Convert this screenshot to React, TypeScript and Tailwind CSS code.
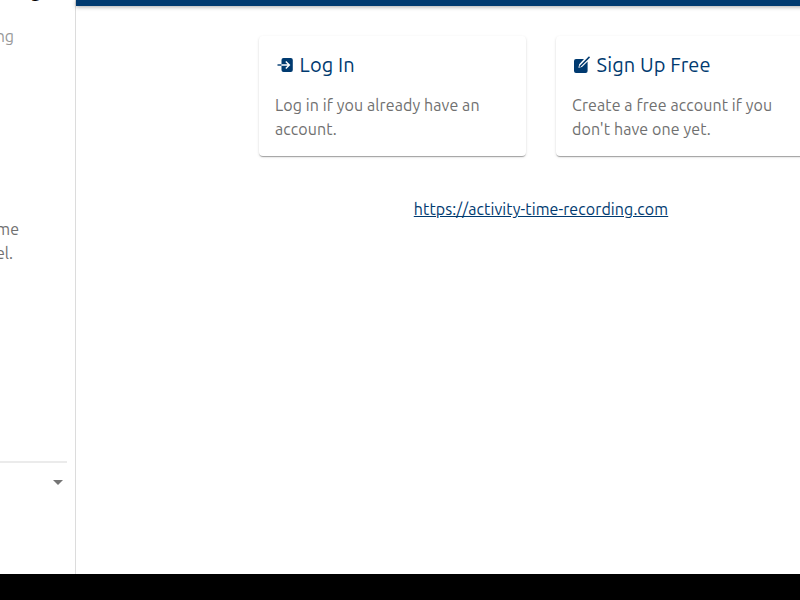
import type { ReactNode } from "react";

function LoginIcon() {
  return (
    <svg className="h-5 w-5 shrink-0" viewBox="0 0 20 20" fill="none">
      <rect x="6.5" y="3" width="11.3" height="14" rx="2" fill="#003a70" />
      <path d="M2.5 10H6.5" stroke="#003a70" strokeWidth="1.4" />
      <path d="M6.5 10H14M10.8 6.4L14.4 10L10.8 13.6" stroke="#fff" strokeWidth="1.4" />
    </svg>
  );
}

function SignUpIcon() {
  return (
    <svg className="h-5 w-5 shrink-0" viewBox="0 0 20 20" fill="none">
      <path d="M4 4H12L7.2 9.2L6.4 12.8L10 12L15.6 6.6V16Q15.6 18 13.6 18H4Q2 18 2 16V6Q2 4 4 4Z" fill="#003a70" />
      <path d="M8.2 11.2L15.8 3.6" stroke="#003a70" strokeWidth="1.5" strokeLinecap="round" />
      <path d="M16 3.4L17.5 1.9" stroke="#003a70" strokeWidth="1.5" />
    </svg>
  );
}

function Card({ icon, title, children }: { icon: ReactNode; title: string; children: ReactNode }) {
  return (
    <section className="h-[120px] w-[267px] shrink-0 rounded bg-white px-4 pt-[13px] shadow-[0_2px_1px_-1px_rgba(0,0,0,0.2),0_1px_1px_0_rgba(0,0,0,0.14),0_1px_3px_0_rgba(0,0,0,0.12)]">
      <h2 className="flex h-8 items-center gap-[4.6px] text-[20px] tracking-[0.12px] whitespace-nowrap text-[#003a70]">
        {icon}
        {title}
      </h2>
      <div className="mt-3 text-base leading-6 tracking-[0.1px] whitespace-nowrap text-[#707070]">{children}</div>
    </section>
  );
}

export default function App() {
  return (
    <div className="flex h-[600px] w-[800px] flex-col overflow-hidden bg-black font-[Ubuntu,'Noto_Sans',sans-serif]">
      <div className="flex h-[574px] shrink-0 overflow-hidden bg-white">
        <aside className="flex w-[76px] shrink-0 flex-col border-r border-[#dcdcdc] text-base leading-6 text-[#707070]">
          <div className="flex h-6 w-[42px] shrink-0 justify-end text-[20px] font-medium text-black">
            <span className="-mt-[22px] h-6 leading-6">g</span>
          </div>
          <div className="flex w-[14px] justify-end text-[#979797]">ng</div>
          <div className="mt-[169px] flex w-[19px] justify-end">me</div>
          <div className="flex w-[13px] justify-end">el.</div>
          <div className="mt-[196px] flex h-10 w-[67px] items-center justify-end border-t-2 border-[#ebebeb] pr-1">
            <svg className="h-[5px] w-[10px]" viewBox="0 0 10 5"><path d="M0 0H10L5 5Z" fill="#757575" /></svg>
          </div>
        </aside>
        <main className="flex w-[930px] shrink-0 flex-col items-center">
          <div className="h-1.5 w-full shrink-0 bg-[#003a70] shadow-[0_1px_4px_rgba(0,0,0,0.35)]" />
          <div className="mt-[30px] flex gap-[30px]">
            <Card icon={<LoginIcon />} title="Log In">
              <p>Log in if you already have an</p>
              <p>account.</p>
            </Card>
            <Card icon={<SignUpIcon />} title="Sign Up Free">
              <p>Create a free account if you</p>
              <p>don't have one yet.</p>
            </Card>
          </div>
          <a className="mt-[41px] text-base leading-6 tracking-[0.1px] text-[#003a70] underline">https://activity-time-recording.com</a>
        </main>
      </div>
    </div>
  );
}
